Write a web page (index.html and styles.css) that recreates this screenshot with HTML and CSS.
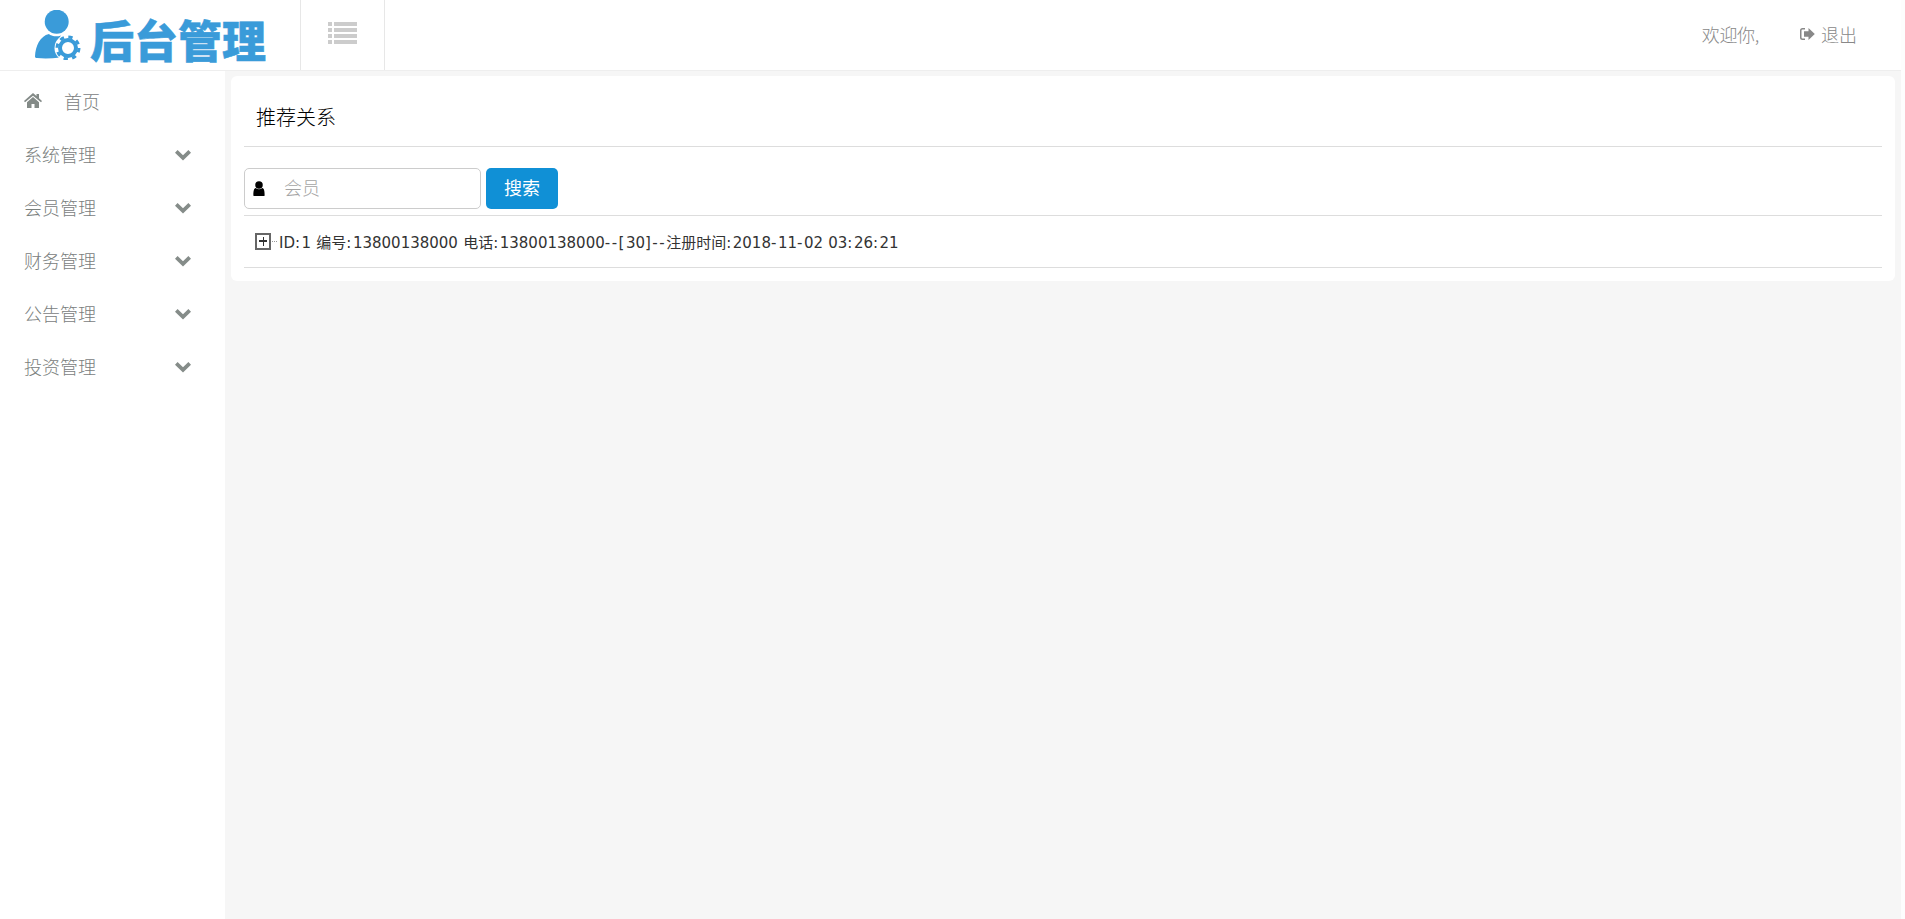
FILE: index.html
```html
<!DOCTYPE html>
<html lang="zh">
<head>
<meta charset="utf-8">
<title>推荐关系</title>
<link rel="stylesheet" href="styles.css">
</head>
<body>
<header class="topbar">
  <a class="logo">
    <svg class="logo-icon" viewBox="0 0 50 50" width="50" height="50" aria-hidden="true">
      <circle class="fill" cx="22.700" cy="11.700" r="12"/>
      <path class="fill" d="M15 24C6 26 1.500 36 1 46.500C1 47.500 2 48 3 48C10 48.800 18 48.500 26 47.500L24 30L27 25.500C24.500 26.500 21 26.500 19 26C17.500 25.500 16 25 15 24Z"/>
      <circle class="halo" cx="34" cy="38" r="13.500"/>
      <circle class="gear-ring" cx="34" cy="38" r="8"/>
      <circle class="gear-teeth" cx="34" cy="38" r="11"/>
    </svg>
    <span class="logo-text">后台管理</span>
  </a>
  <div class="toggle">
    <svg viewBox="0 0 29 22" width="29" height="22" aria-hidden="true">
      <path d="M0 0h4v4H0zM6 0h23v4H6zM0 6h4v4H0zM6 6h23v4H6zM0 12h4v4H0zM6 12h23v4H6zM0 18h4v4H0zM6 18h23v4H6z"/>
    </svg>
  </div>
  <div class="top-right">
    <span class="welcome">欢迎你,</span>
    <a class="logout">
      <svg viewBox="0 0 16 14" width="16" height="14" aria-hidden="true">
        <path d="M6 1H3.500A2.500 2.500 0 0 0 1 3.500v7A2.500 2.500 0 0 0 3.500 13H6v-1.500H3.500a1 1 0 0 1-1-1v-7a1 1 0 0 1 1-1H6z"/>
        <path d="M9.500 1L15.800 7l-6.300 6V9.700H5V4.300h4.500z"/>
      </svg>
      退出
    </a>
  </div>
</header>
<div class="layout">
  <nav class="sidebar">
    <a class="nav-item nav-home">
      <svg class="home-icon" viewBox="0 0 18 15" width="18" height="15" aria-hidden="true">
        <path d="M9 0l3.500 3V1h2.500v4.200L18 8l-1 1.200L9 2.800 1 9.200 0 8z"/>
        <path d="M3 9.200L9 4l6 5.200V15h-4.500v-4h-3v4H3z"/>
      </svg>
      <span>首页</span>
    </a>
    <a class="nav-item"><span>系统管理</span><svg class="chev" viewBox="0 0 16 11" width="16" height="11" aria-hidden="true"><path d="M2.600 0L8 5.200 13.400 0 16 2.700 8 10.500 0 2.700z"/></svg></a>
    <a class="nav-item"><span>会员管理</span><svg class="chev" viewBox="0 0 16 11" width="16" height="11" aria-hidden="true"><path d="M2.600 0L8 5.200 13.400 0 16 2.700 8 10.500 0 2.700z"/></svg></a>
    <a class="nav-item"><span>财务管理</span><svg class="chev" viewBox="0 0 16 11" width="16" height="11" aria-hidden="true"><path d="M2.600 0L8 5.200 13.400 0 16 2.700 8 10.500 0 2.700z"/></svg></a>
    <a class="nav-item"><span>公告管理</span><svg class="chev" viewBox="0 0 16 11" width="16" height="11" aria-hidden="true"><path d="M2.600 0L8 5.200 13.400 0 16 2.700 8 10.500 0 2.700z"/></svg></a>
    <a class="nav-item"><span>投资管理</span><svg class="chev" viewBox="0 0 16 11" width="16" height="11" aria-hidden="true"><path d="M2.600 0L8 5.200 13.400 0 16 2.700 8 10.500 0 2.700z"/></svg></a>
  </nav>
  <main class="content">
    <section class="card">
      <h1 class="card-title">推荐关系</h1>
      <form class="search">
        <div class="input-wrap">
          <svg class="user-icon" viewBox="0 0 14 16" width="14" height="15" aria-hidden="true">
            <circle cx="7" cy="4.300" r="4"/>
            <path d="M3.500 7.500C1.500 8 1 10.500 1 15.500c0 .3.200.5.500.5h11c.3 0 .5-.2.500-.5 0-5-.5-7.500-2.500-8-1 .8-2.200 1.300-3.500 1.300S4.500 8.300 3.500 7.500z"/>
          </svg>
          <input class="member-input" type="text" placeholder="会员">
        </div>
        <button class="search-btn" type="button">搜索</button>
      </form>
      <div class="tree">
        <span class="tree-toggle"></span><span class="tree-dots"></span><span class="tree-text">ID<span class="sep">:</span>1 编号<span class="sep">:</span>13800138000 电话<span class="sep">:</span>13800138000<span class="sep">--[</span>30<span class="sep">]--</span>注册时间<span class="sep">:</span>2018<span class="sep">-</span>11<span class="sep">-</span>02 03<span class="sep">:</span>26<span class="sep">:</span>21</span>
      </div>
    </section>
  </main>
</div>
</body>
</html>
```
FILE: styles.css
```css
* { box-sizing: border-box; }
html { height: 100%; background: #fdfdfd; }
body {
  margin: 0;
  height: 100%;
  width: 1901px;
  background: #f6f6f6;
  font-family: "DejaVu Sans", "Noto Sans CJK SC", sans-serif;
  overflow: hidden;
}
.topbar {
  display: flex;
  align-items: stretch;
  height: 71px;
  background: #fff;
  border-bottom: 1px solid #eee;
}
.logo {
  display: flex;
  width: 300px;
  padding: 10px 0 0 34px;
  color: #3a9bd9;
}
.logo-icon { flex: none; }
.logo-icon .fill { fill: #3a9bd9; }
.logo-icon .halo { fill: #fff; }
.logo-icon .gear-ring { fill: none; stroke: #3a9bd9; stroke-width: 4; }
.logo-icon .gear-teeth { fill: none; stroke: #3a9bd9; stroke-width: 3; stroke-dasharray: 4.3 4.34; }
.logo-text {
  font-family: "Noto Sans CJK SC", sans-serif;
  font-weight: 900;
  font-size: 44px;
  line-height: 58px;
  margin-left: 6px;
  white-space: nowrap;
  -webkit-text-stroke: 0.5px #3a9bd9;
}
.toggle {
  width: 85px;
  display: flex;
  align-items: center;
  justify-content: center;
  border-left: 1px solid #e7e7e7;
  border-right: 1px solid #e7e7e7;
}
.toggle svg { fill: #ccc; margin-bottom: 4px; }
.top-right {
  margin-left: auto;
  display: flex;
  align-items: center;
  color: #888;
  font-size: 18px;
  font-weight: 300;
  font-family: "Noto Sans CJK SC", sans-serif;
  padding: 0 44px 2px 0;
}
.welcome { margin-right: 40px; letter-spacing: -0.3px; }
.logout { display: flex; align-items: center; gap: 6px; }
.logout svg { fill: #888; }
.layout { display: flex; height: 848px; }
.sidebar {
  width: 225px;
  flex: none;
  background: #fff;
  padding-top: 3px;
}
.nav-item {
  display: flex;
  align-items: center;
  justify-content: space-between;
  height: 53px;
  padding: 0 33px 0 24px;
  color: #7a807d;
  font-size: 18px;
  font-weight: 300;
  font-family: "Noto Sans CJK SC", sans-serif;
}
.nav-home { justify-content: flex-start; gap: 22px; }
.home-icon { fill: #838a87; flex: none; }
.chev { fill: #858c89; flex: none; margin: 3px 1px 0 0; }
.content { flex: 1; padding: 5px 6px 0 6px; }
.card {
  background: #fff;
  border-radius: 6px;
  padding: 0 13px;
  height: 205px;
}
.card-title {
  margin: 0;
  height: 71px;
  border-bottom: 1px solid #ddd;
  padding: 26px 0 0 12px;
  font-size: 20px;
  font-weight: 300;
  line-height: 30px;
  color: #000;
  font-family: "Noto Sans CJK SC", sans-serif;
}
.search {
  display: flex;
  gap: 5px;
  margin-top: 21px;
  height: 48px;
  padding-bottom: 6px;
  border-bottom: 1px solid #ddd;
}
.input-wrap { position: relative; width: 237px; height: 41px; }
.user-icon { position: absolute; left: 8px; top: 13px; fill: #000; }
.member-input {
  width: 100%;
  height: 100%;
  border: 1px solid #ccc;
  border-radius: 5px;
  padding: 0 12px 3px 39px;
  font-size: 18px;
  font-weight: 300;
  font-family: "Noto Sans CJK SC", sans-serif;
  outline: none;
}
.member-input::placeholder { color: #a4a4a4; opacity: 1; }
.search-btn {
  width: 72px;
  height: 41px;
  border: 0;
  border-radius: 5px;
  background: #1090d6;
  color: #fff;
  font-size: 18px;
  font-weight: 400;
  font-family: "Noto Sans CJK SC", sans-serif;
  padding: 0 0 3px;
}
.tree {
  display: flex;
  align-items: center;
  height: 52px;
  padding: 0 0 1px 11px;
  border-bottom: 1px solid #ddd;
  font-size: 15px;
  color: #333;
  white-space: nowrap;
}
.tree-text { word-spacing: 0.5px; }
.sep { letter-spacing: 1.5px; }
.tree-toggle {
  position: relative;
  width: 16px;
  height: 17px;
  border: 2px solid #666;
  flex: none;
}
.tree-toggle::before, .tree-toggle::after {
  content: "";
  position: absolute;
  background: #333;
}
.tree-toggle::before { left: 2px; right: 2px; top: 5.500px; height: 1.500px; }
.tree-toggle::after { top: 2px; bottom: 2px; left: 5.500px; width: 1.500px; }
.tree-dots {
  width: 5px;
  margin: 0 2px 0 1px;
  border-top: 1px dotted #999;
}
```
